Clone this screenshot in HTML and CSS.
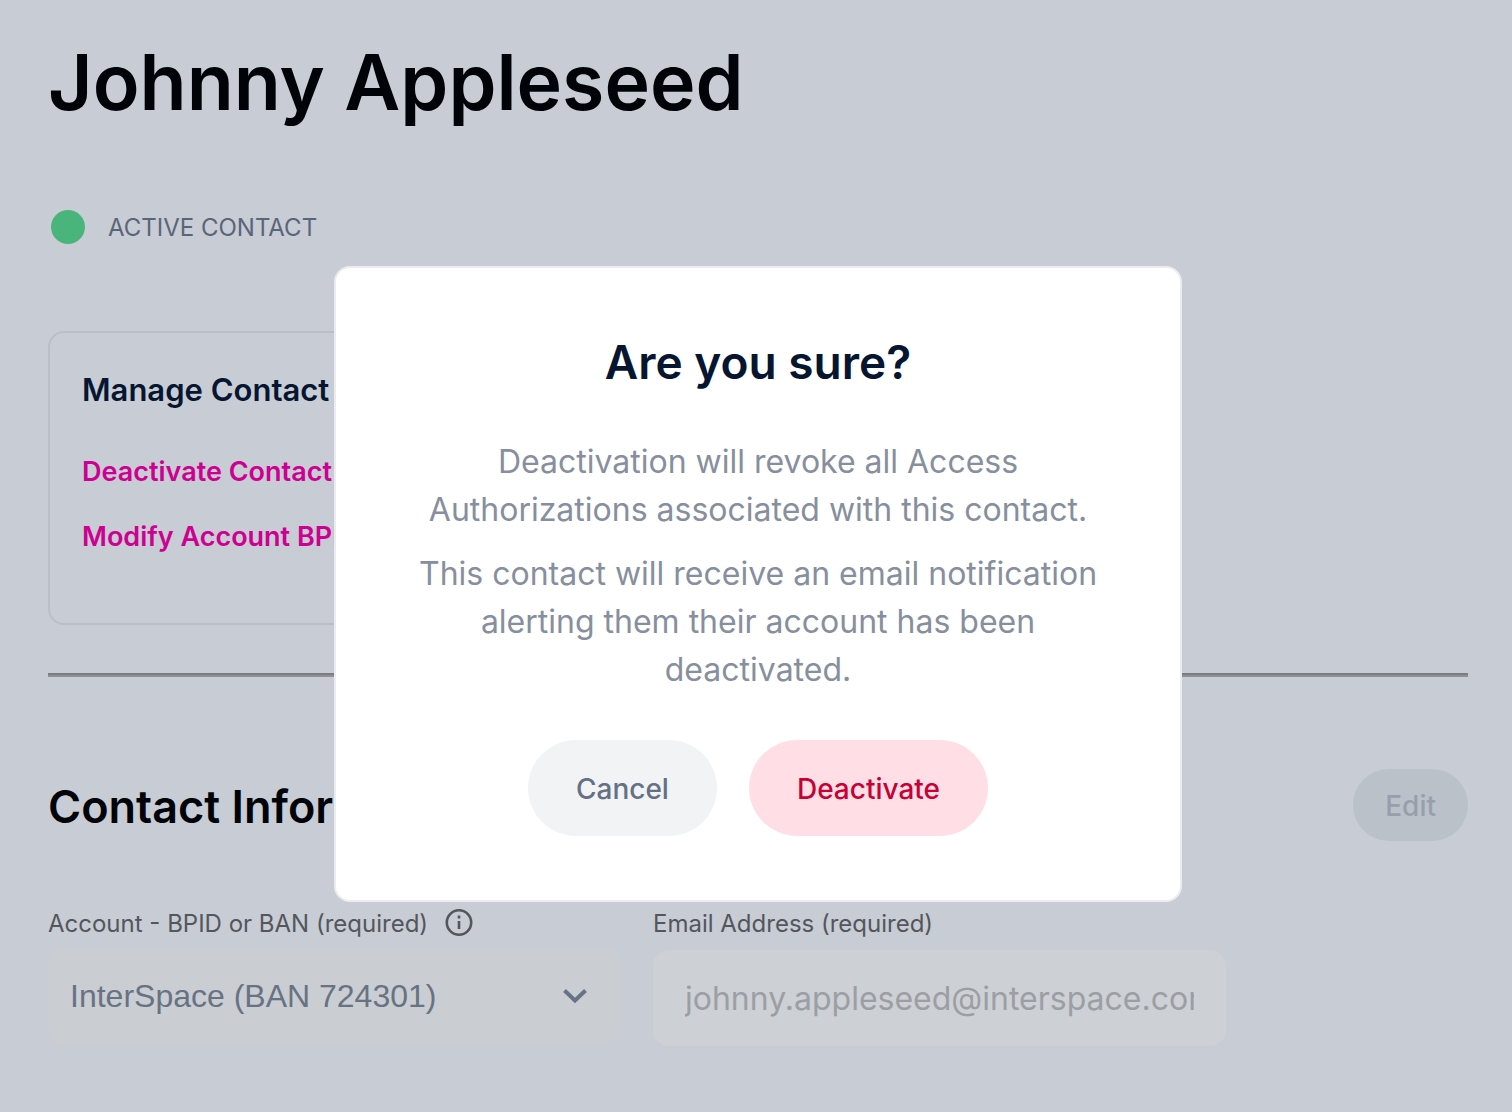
FILE: index.html
```
<!DOCTYPE html>
<html lang="en">

<head>
    <meta charset="utf-8">
    <title>Johnny Appleseed</title>
    <link rel="stylesheet" href="styles.css">
</head>

<body>
    <main class="page">
        <h1>Johnny Appleseed</h1>
        <div class="status">
            <span class="dot"></span>
            <span>ACTIVE CONTACT</span>
        </div>
        <section class="card">
            <h3>Manage Contact</h3>
            <a href="#deactivate">Deactivate Contact</a>
            <a href="#modify">Modify Account BPID</a>
        </section>
        <hr>
        <div class="section-head">
            <h2>Contact Information</h2>
            <button type="button" class="btn btn-edit" disabled>Edit</button>
        </div>
        <form class="fields">
            <div class="field">
                <div class="label-row">
                    <label for="account">Account - BPID or BAN (required)</label>
                    <svg class="info" viewBox="0 0 28 28" aria-hidden="true">
                        <circle cx="14" cy="13.5" r="12.2" />
                        <path d="M14 12v8M14 6.5v3" />
                    </svg>
                </div>
                <div class="select-box">
                    <select id="account">
                        <option>InterSpace (BAN 724301)</option>
                    </select>
                    <svg class="chevron" viewBox="0 0 24 16" aria-hidden="true">
                        <path d="M1.5 2.5L12 12.5L22.5 2.5" />
                    </svg>
                </div>
            </div>
            <div class="field">
                <div class="label-row">
                    <label for="email">Email Address (required)</label>
                </div>
                <input id="email" type="email" value="johnny.appleseed@interspace.com" disabled>
            </div>
        </form>
    </main>

    <div class="overlay">
        <div class="modal" role="dialog" aria-modal="true" aria-labelledby="modal-title">
            <h2 id="modal-title">Are you sure?</h2>
            <p>Deactivation will revoke all Access Authorizations associated with this contact.</p>
            <p>This contact will receive an email notification alerting them their account has been deactivated.</p>
            <div class="actions">
                <button type="button" class="btn btn-cancel">Cancel</button>
                <button type="button" class="btn btn-danger">Deactivate</button>
            </div>
        </div>
    </div>
</body>

</html>
```

FILE: styles.css
```
* {
    box-sizing: border-box;
}

body {
    margin: 0;
    background: #c8ccd4;
    font-family: Inter, sans-serif;
    color: #000408;
}

h1, h2, h3, p {
    margin: 0;
}

.page {
    padding: 34px 44px 64px 48px;
}

h1 {
    font-size: 77px;
    line-height: 96px;
    font-weight: 600;
}

h2 {
    font-size: 46px;
    line-height: 60px;
    font-weight: 600;
}

.status {
    display: flex;
    align-items: center;
    gap: 23px;
    height: 34px;
    margin-top: 80px;
    padding-left: 3px;
    font-size: 24px;
    color: #5a657a;
}

.dot {
    width: 34px;
    height: 34px;
    border-radius: 50%;
    background: #4ab57b;
}

.card {
    display: flex;
    flex-direction: column;
    align-items: flex-start;
    width: 50%;
    margin-top: 87px;
    padding: 37px 32px 70px;
    border: 2px solid #babec7;
    border-radius: 16px;
}

.card h3 {
    margin-bottom: 46px;
    font-size: 31px;
    line-height: 40px;
    font-weight: 600;
    color: #061630;
}

.card a {
    font-size: 27px;
    line-height: 32px;
    font-weight: 600;
    color: #cc0091;
    text-decoration: none;
}

.card a + a {
    margin-top: 33px;
}

hr {
    height: 4px;
    margin: 48px 0 92px;
    border: 0;
    border-top: 2px solid #7b7d80;
    border-bottom: 2px solid #8d9094;
}

.section-head {
    display: flex;
    align-items: center;
    justify-content: space-between;
}

.section-head h2 {
    padding-top: 4px;
    font-size: 45px;
}

.btn {
    border: 0;
    font-family: inherit;
    font-size: 28px;
    font-weight: 500;
}

.btn-edit {
    height: 72px;
    padding: 2px 32px 0;
    border-radius: 36px;
    background: #bac1c9;
    color: #989fac;
}

.fields {
    display: grid;
    grid-template-columns: 1fr 1fr;
    gap: 32px;
    max-width: 1178px;
    margin-top: 66px;
}

.label-row {
    display: flex;
    align-items: center;
    gap: 17px;
    height: 32px;
    margin-bottom: 11px;
    font-size: 24px;
    color: #53575c;
}

.info {
    width: 28px;
    height: 28px;
    fill: none;
    stroke: #53575c;
    stroke-width: 2.6;
}

.select-box {
    position: relative;
    margin-top: -2px;
}

.field select,
.field input {
    display: block;
    width: 100%;
    height: 96px;
    border: 0;
    border-radius: 16px;
    font-size: 32px;
}

.field select {
    appearance: none;
    padding: 0 72px 0 22px;
    background: #cacdd1;
    font-family: "Liberation Sans", Arial, sans-serif;
    color: #677385;
}

.field input {
    padding: 0 32px;
    background: #cdd0d5;
    font-family: inherit;
    color: #9b9fa4;
}

.chevron {
    position: absolute;
    top: 40px;
    right: 34px;
    width: 24px;
    height: 16px;
    fill: none;
    stroke: #677385;
    stroke-width: 4;
    pointer-events: none;
}

.overlay {
    position: fixed;
    inset: 0;
    display: flex;
    align-items: center;
    justify-content: center;
    padding: 56px 0 0 4px;
}

.modal {
    width: 848px;
    max-width: 100%;
    padding: 64px 80px;
    border: 2px solid #ebecef;
    border-radius: 16px;
    background: #fff;
    text-align: center;
}

.modal h2 {
    margin-bottom: 46px;
    color: #061630;
}

.modal p {
    margin-bottom: 16px;
    font-size: 32px;
    line-height: 48px;
    color: #878f9e;
}

.actions {
    display: flex;
    justify-content: center;
    gap: 32px;
    margin-top: 46px;
}

.actions .btn {
    height: 96px;
    padding: 2px 48px 0;
    border-radius: 48px;
}

.btn-cancel {
    background: #f1f3f5;
    color: #667085;
}

.btn-danger {
    background: #ffdfe5;
    color: #c70036;
}
```
